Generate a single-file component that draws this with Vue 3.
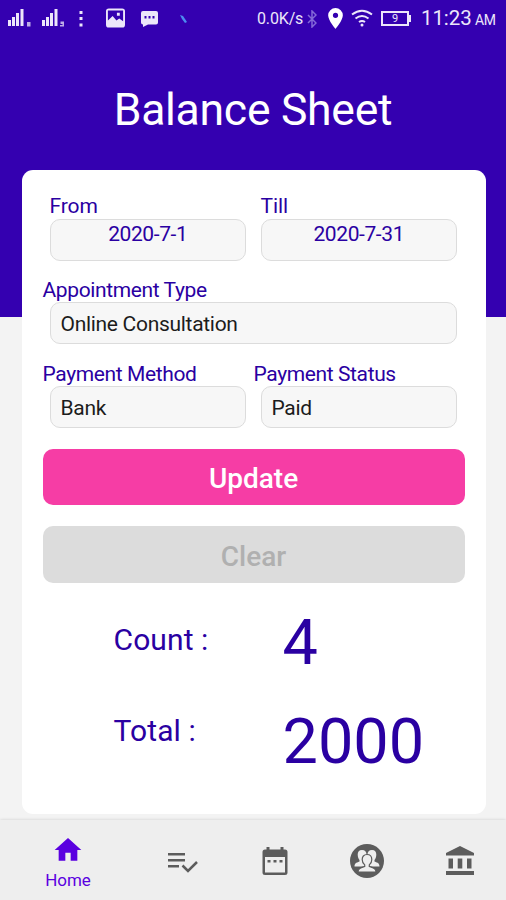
<script setup>
import { ref } from 'vue'

const from = ref('2020-7-1')
const till = ref('2020-7-31')
const appointmentType = ref('Online Consultation')
const paymentMethod = ref('Bank')
const paymentStatus = ref('Paid')
const count = ref(4)
const total = ref(2000)
</script>

<template>
  <div class="screen">
    <!-- Status bar -->
    <div class="status-bar">
      <svg class="signal" viewBox="0 0 23 20">
        <path d="M0 12h3v6H0zM4 9h3v9H4zM8 5h3v13H8zM12.5 1h3v17h-3z" />
        <path class="dim" d="M19 14h3.5v4.5H19z" />
      </svg>
      <svg class="signal second" viewBox="0 0 23 20">
        <path d="M0 12h3v6H0zM4 9h3v9H4zM8 5h3v13H8zM12.5 1h3v17h-3z" />
        <path class="dim" d="M18.5 13.5h3.5v5h-4v-1.5h2.5v-1h-2z" />
      </svg>
      <svg class="more" viewBox="0 0 4 20">
        <path d="M.5 2h3v3h-3zM.5 8h3v3h-3zM.5 14.5h3v3h-3z" />
      </svg>
      <svg class="picture" viewBox="0 0 20 20">
        <path fill-rule="evenodd" d="M3 0h14q3 0 3 3v14q0 3-3 3H3q-3 0-3-3V3q0-3 3-3zM2 2v10.5L7 8l4 4.5 3-2 4 3V2zM11.5 4.5h3v3h-3z" />
      </svg>
      <svg class="message" viewBox="0 0 17 16">
        <path fill-rule="evenodd" d="M2 0h13q2 0 2 2v9.5q0 2-2 2H7L2 16v-2.5q-2 0-2-2V2q0-2 2-2zM3.5 5v2.5h2V5zM7.5 5v2.5h2V5zM11.5 5v2.5h2V5z" />
      </svg>
      <svg class="pen" viewBox="0 0 10 10">
        <path d="M2 1l3 1 4 6-2 1-3-4z" />
      </svg>
      <span class="speed">0.0K/s</span>
      <svg class="bluetooth" viewBox="0 0 10 18">
        <path d="M1 5l8 8-4 4V1l4 4-8 8" />
      </svg>
      <svg class="pin" viewBox="0 0 14 20">
        <path fill-rule="evenodd" d="M7 0a7 7 0 0 0-7 7c0 5 7 13 7 13s7-8 7-13a7 7 0 0 0-7-7zm0 4.500a2.500 2.500 0 1 1 0 5 2.500 2.500 0 0 1 0-5z" />
      </svg>
      <svg class="wifi" viewBox="0 0 22 18">
        <path d="M1 5.5q10-7.500 20 0M4.500 9.500q6.500-5 13 0M8 13q3-2.200 6 0" />
        <circle cx="11" cy="16" r="1.5" />
      </svg>
      <span class="battery"><span class="level">9</span></span>
      <span class="clock">11:23 <small>AM</small></span>
    </div>

    <h1 class="title">Balance Sheet</h1>

    <!-- Filter card -->
    <main class="card">
      <div class="row">
        <div class="group">
          <label class="label">From</label>
          <div class="field date">{{ from }}</div>
        </div>
        <div class="group">
          <label class="label">Till</label>
          <div class="field date">{{ till }}</div>
        </div>
      </div>
      <div class="row">
        <div class="group">
          <label class="label outdent">Appointment Type</label>
          <div class="field">{{ appointmentType }}</div>
        </div>
      </div>
      <div class="row">
        <div class="group">
          <label class="label outdent">Payment Method</label>
          <div class="field">{{ paymentMethod }}</div>
        </div>
        <div class="group">
          <label class="label outdent">Payment Status</label>
          <div class="field">{{ paymentStatus }}</div>
        </div>
      </div>

      <button class="btn update">Update</button>
      <button class="btn clear">Clear</button>

      <div class="result">
        <span class="result-label">Count :</span>
        <span class="result-value">{{ count }}</span>
      </div>
      <div class="result">
        <span class="result-label">Total :</span>
        <span class="result-value">{{ total }}</span>
      </div>
    </main>

    <!-- Bottom navigation -->
    <nav class="nav">
      <a class="nav-item active">
        <svg width="32" height="32" viewBox="0 0 24 24">
          <path d="M10 20v-6h4v6h5v-8h3L12 3 2 12h3v8z" />
        </svg>
        <span>Home</span>
      </a>
      <a class="nav-item">
        <svg class="icon-list" width="30" height="20" viewBox="0 0 30 20">
          <path d="M0 0h17v2.5H0zM0 6h17v2.5H0zM0 12h11v2.5H0z" />
          <path class="check" d="M14.5 12.5l5.5 5.5L29 9" />
        </svg>
      </a>
      <a class="nav-item">
        <svg width="26" height="28" viewBox="0 0 26 28">
          <path fill-rule="evenodd" d="M4.5 0h3v2.5h11V0h3v2.5H23q2.5 0 2.5 2.5v20.5q0 2.5-2.5 2.5H3Q.5 28 .5 25.5V5Q.5 2.5 3 2.5h1.5zM3 10v15.5h20V10z" />
          <path d="M5.500 13h3v2.500h-3zM11.500 13h3v2.500h-3zM17.500 13h3v2.500h-3z" />
        </svg>
      </a>
      <a class="nav-item">
        <svg class="icon-group" width="34" height="34" viewBox="0 0 34 34">
          <circle cx="17" cy="17" r="17" />
          <path class="person" d="M12 6c3 0 4.500 2 4.500 4.500S15.500 15 14.500 16v2L18 20v2.500H4.500c0-3 1.500-3.700 5-5V16C8.500 15 7.700 13 7.700 10.500S9 6 12 6z" />
          <path class="person" d="M22 6c-3 0-4.500 2-4.500 4.500s1 4.500 2 5.500v2L16 20v2.500h13.500c0-3-1.500-3.700-5-5V16c1-1 1.800-3 1.800-5.500S25 6 22 6z" />
          <path class="person front" d="M17 10.500c-3.300 0-4.800 2.300-4.800 5s1 4.200 2.500 5.400v1.600c-4 1.300-6.700 2-6.700 5.500h18c0-3.500-2.700-4.200-6.700-5.500v-1.600c1.500-1.200 2.500-2.700 2.500-5.400s-1.500-5-4.800-5z" />
        </svg>
      </a>
      <a class="nav-item">
        <svg width="28" height="29" viewBox="0 0 28 29">
          <path d="M14 0L28 7V9.500H0V7z" />
          <path d="M2.500 12.500h4.500v10H2.500zM11.700 12.500h4.600v10h-4.600zM21 12.500h4.500v10H21zM0 25h28v4H0z" />
        </svg>
      </a>
    </nav>
  </div>
</template>

<style>
body {
  margin: 0;
}
</style>

<style scoped>
.screen {
  display: flex;
  flex-direction: column;
  box-sizing: border-box;
  width: 506px;
  height: 900px;
  overflow: hidden;
  font-family: Roboto, sans-serif;
  color: #2a00a2;
  background: linear-gradient(#3400b0 317px, #f3f3f3 317px);
}

/* Status bar */
.status-bar {
  display: flex;
  align-items: center;
  height: 37px;
  padding-left: 8px;
  color: #ece6fa;
  white-space: nowrap;
}

.status-bar svg {
  flex: none;
  fill: currentColor;
}

.signal {
  width: 23px;
  height: 20px;
  margin-top: -2px;
}

.signal.second {
  margin-left: 11px;
}

.signal .dim {
  opacity: 0.75;
}

.more {
  width: 4px;
  height: 20px;
  margin-left: 14px;
}

.picture {
  width: 19px;
  height: 20px;
  margin: -1px 0 0 23px;
}

.message {
  width: 17px;
  height: 16px;
  margin-left: 16px;
}

.status-bar .pen {
  width: 10px;
  height: 10px;
  margin-left: 20px;
  fill: #4c8cf0;
}

.speed {
  width: 50px;
  margin-left: 69px;
  font-size: 16px;
  line-height: 40px;
  letter-spacing: -0.15px;
}

.status-bar .bluetooth {
  width: 10px;
  height: 18px;
  fill: none;
  stroke: #8468d8;
  stroke-width: 1.5;
}

.pin {
  width: 15px;
  height: 21px;
  margin: -1px 0 0 11px;
  color: #fff;
}

.wifi {
  width: 22px;
  height: 18px;
  margin: -1px 0 0 8px;
}

.wifi path {
  fill: none;
  stroke: currentColor;
  stroke-width: 2;
}

.battery {
  position: relative;
  display: flex;
  flex: none;
  justify-content: center;
  box-sizing: border-box;
  width: 28px;
  height: 15px;
  margin-left: 8px;
  border: 2px solid currentColor;
}

.battery::after {
  position: absolute;
  top: 2px;
  right: -4px;
  width: 2px;
  height: 7px;
  background: currentColor;
  content: '';
}

.level {
  font-size: 11px;
  line-height: 11px;
}

.clock {
  margin-left: 12px;
  font-size: 20.5px;
  line-height: 42px;
  letter-spacing: -0.1px;
}

.clock small {
  margin-left: -1.5px;
  font-size: 14px;
  letter-spacing: -0.5px;
}

.title {
  margin: 46px 0 0;
  font-size: 44.5px;
  font-weight: 400;
  line-height: 55px;
  letter-spacing: -0.27px;
  color: #fff;
  text-align: center;
}

/* Card */
.card {
  display: flex;
  flex-direction: column;
  flex: none;
  box-sizing: border-box;
  width: 464px;
  height: 644.5px;
  margin: 31.5px 0 0 21.5px;
  padding: 24px 21px 0;
  border-radius: 11px;
  background: #fff;
}

.row {
  display: flex;
  gap: 14.5px;
  height: 83.6px;
  padding: 0 7.5px 0 7px;
}

.group {
  display: flex;
  flex: 1;
  flex-direction: column;
}

.label {
  height: 25px;
  font-size: 21px;
  line-height: 25px;
  letter-spacing: -0.1px;
  white-space: nowrap;
}

.outdent {
  margin-left: -7px;
  line-height: 26px;
  letter-spacing: -0.38px;
}

.field {
  box-sizing: border-box;
  height: 42px;
  padding-left: 10px;
  border: 1px solid #dcdcdc;
  border-radius: 10px;
  background: #f7f7f7;
  font-size: 21px;
  line-height: 42px;
  letter-spacing: -0.3px;
  color: #1c1c1c;
}

.date {
  padding-left: 0;
  line-height: 28px;
  letter-spacing: -0.4px;
  color: #2a00a2;
  text-align: center;
}

.btn {
  flex: none;
  height: 56.5px;
  margin: 4.7px 0 0;
  padding: 3px 0 0;
  border: 0;
  border-radius: 10px;
  font-family: inherit;
  font-size: 28px;
  font-weight: 500;
}

.update {
  background: #f63da5;
  color: #fff;
}

.clear {
  margin-top: 21px;
  background: #dcdcdc;
  color: #b0b0b0;
}

.result {
  display: flex;
  align-items: flex-start;
  height: 98.5px;
  padding-left: 71px;
}

.clear + .result {
  margin-top: 20px;
}

.result-label {
  width: 169px;
  margin-top: 17px;
  font-size: 30px;
  line-height: 40px;
  letter-spacing: 0.1px;
}

.result + .result .result-label {
  margin-top: 10px;
}

.result-value {
  font-size: 63px;
  line-height: 80px;
}

.result + .result .result-value {
  line-height: 81px;
}

/* Bottom navigation */
.nav {
  display: flex;
  flex: none;
  height: 81px;
  margin-top: 5.5px;
  background: #eee;
  box-shadow: 0 0 3px rgba(0, 0, 0, 0.16);
}

.nav-item {
  display: flex;
  flex: 1;
  align-items: center;
  justify-content: center;
  padding-top: 1px;
}

.nav-item svg {
  fill: #5c5c5c;
}

.nav-item.active {
  flex: none;
  flex-direction: column;
  justify-content: flex-start;
  box-sizing: border-box;
  width: 136px;
  padding-top: 14px;
  font-size: 17px;
  line-height: 20px;
  color: #5a00e0;
}

.nav-item.active svg {
  margin-bottom: 4px;
  fill: #5a00e0;
}

.nav-item .icon-list {
  margin: 4px 0 0 1px;
}

.icon-list .check {
  fill: none;
  stroke: #5c5c5c;
  stroke-width: 2.5;
}

.icon-group .person {
  fill: #eee;
}

.icon-group .front {
  stroke: #5c5c5c;
  stroke-width: 1.2;
}
</style>
